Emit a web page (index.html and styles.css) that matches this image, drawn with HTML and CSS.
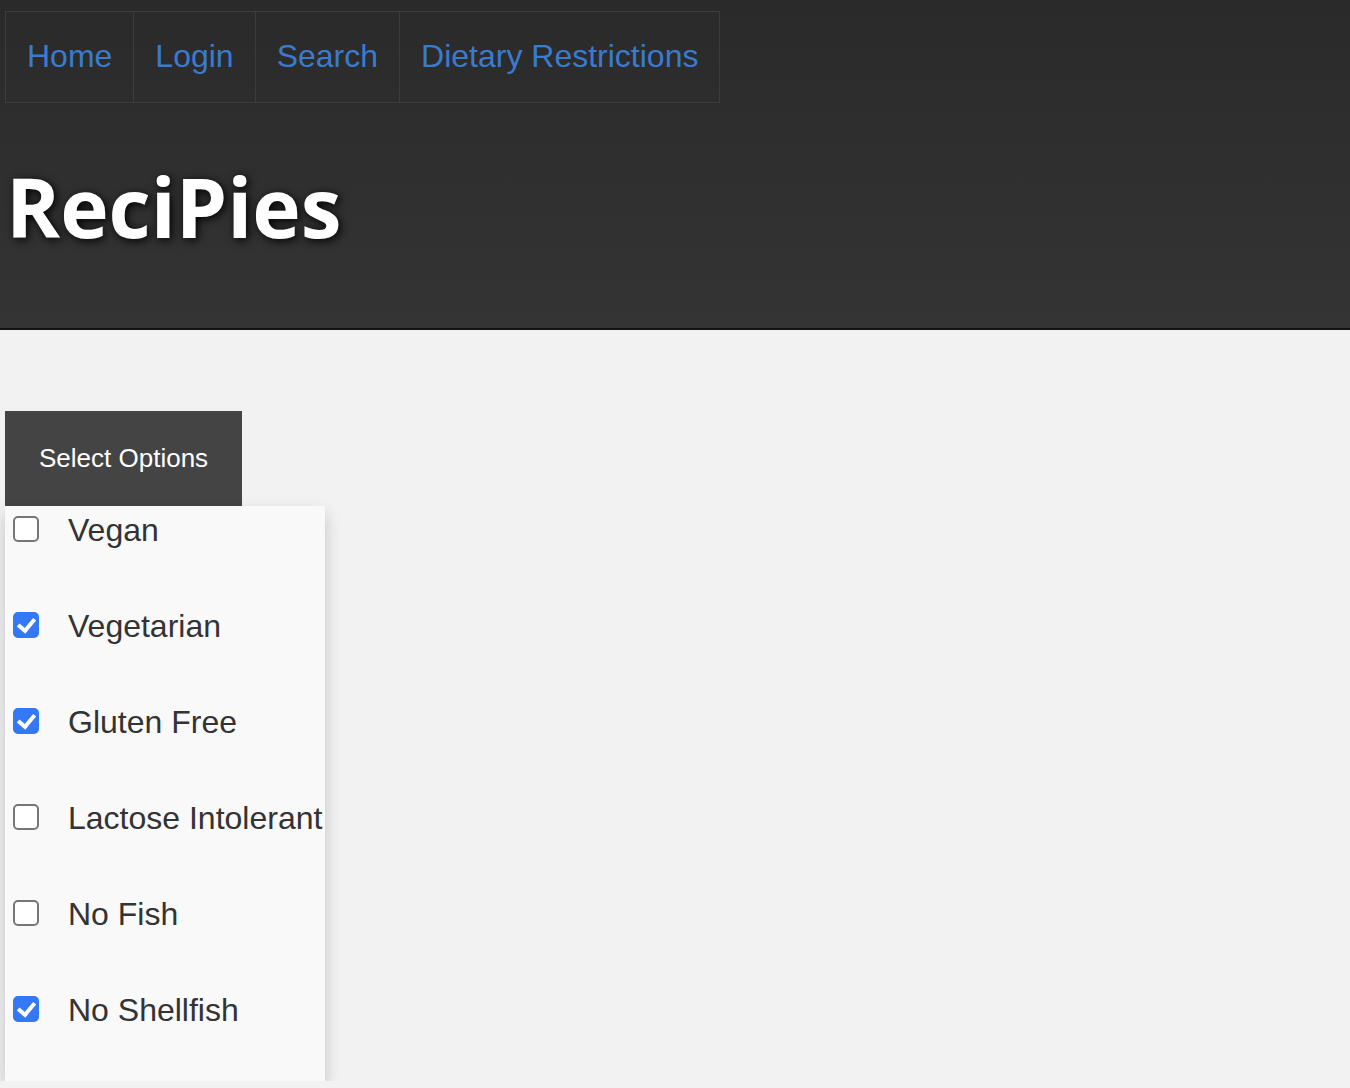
FILE: index.html
```html
<!DOCTYPE html>
<html>
<head>
  <title>ReciPies - Dietary Restrictions</title>
  <link rel="stylesheet" href="styles.css">
</head>
<body>
  <div class="header">
    <ul class="nav">
      <li><a href="#">Home</a></li>
      <li><a href="#">Login</a></li>
      <li><a href="#">Search</a></li>
      <li><a href="#">Dietary Restrictions</a></li>
    </ul>
    <h1>ReciPies</h1>
  </div>

  <div class="content">
    <div class="dropdown">
      <button class="dropbtn">Select Options</button>
      <div class="dropdown-content">
        <label class="option"><input type="checkbox" name="vegan"><span class="box"></span>Vegan</label>
        <label class="option"><input type="checkbox" name="vegetarian" checked><span class="box"></span>Vegetarian</label>
        <label class="option"><input type="checkbox" name="gluten" checked><span class="box"></span>Gluten Free</label>
        <label class="option"><input type="checkbox" name="lactose"><span class="box"></span>Lactose Intolerant</label>
        <label class="option"><input type="checkbox" name="fish"><span class="box"></span>No Fish</label>
        <label class="option"><input type="checkbox" name="shellfish" checked><span class="box"></span>No Shellfish</label>
      </div>
    </div>
  </div>
</body>
</html>
```

FILE: styles.css
```css
body {
  margin: 0;
  background-color: #f2f2f2;
  font-family: "Liberation Sans", Arial, sans-serif;
}
.header {
  background: linear-gradient(to bottom, #2a2a2a, #343434);
  border-bottom: 2px solid #111;
  padding: 11px 5px 0;
  height: 317px;
}
.nav {
  list-style: none;
  margin: 0;
  padding: 0;
  display: inline-flex;
  border: 1px solid #3c3c3c;
}
.nav li {
  border-left: 1px solid #3c3c3c;
}
.nav li:first-child {
  border-left: none;
}
.nav a {
  display: block;
  padding: 26px 21px 27px;
  font-size: 32px;
  line-height: 37px;
  color: #3a7bd0;
  text-decoration: none;
}
h1 {
  margin: 48px 0 0 1px;
  font-family: "Open Sans", sans-serif;
  font-weight: bold;
  font-size: 82px;
  line-height: 110px;
  color: #fff;
  text-shadow: 2px 2px 10px #000;
}
.content {
  padding: 81px 5px 0;
}
.dropdown {
  display: inline-block;
}
.dropbtn {
  background-color: #444;
  color: #fff;
  border: none;
  padding: 32px 34px;
  font-family: "Liberation Sans", Arial, sans-serif;
  font-size: 26px;
  line-height: 31px;
  cursor: pointer;
  display: block;
}
.dropdown-content {
  width: 320px;
  background-color: #f9f9f9;
  box-shadow: 0 8px 16px rgba(0, 0, 0, 0.2);
  padding: 6px 0 52px;
  display: flex;
  flex-direction: column;
  gap: 59px;
}
.option {
  display: flex;
  align-items: center;
  font-size: 32px;
  line-height: 37px;
  color: #333;
  white-space: nowrap;
  cursor: pointer;
}
.option input {
  display: none;
}
.box {
  width: 22px;
  height: 22px;
  margin: 0 29px -2px 8px;
  border: 2px solid #767676;
  border-radius: 5px;
  background-color: #fff;
  position: relative;
  top: -3px;
}
.option input:checked + .box {
  background-color: #3478f6;
  border-color: #3478f6;
}
.option input:checked + .box::after {
  content: "";
  position: absolute;
  left: 6px;
  top: 1px;
  width: 7px;
  height: 13px;
  border: solid #fff;
  border-width: 0 4px 4px 0;
  transform: rotate(40deg);
}
```
